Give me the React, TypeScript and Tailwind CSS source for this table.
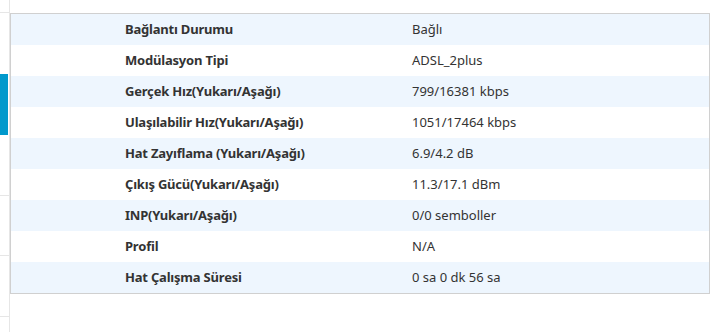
const rows: [string, string][] = [
  ["Bağlantı Durumu", "Bağlı"],
  ["Modülasyon Tipi", "ADSL_2plus"],
  ["Gerçek Hız(Yukarı/Aşağı)", "799/16381 kbps"],
  ["Ulaşılabilir Hız(Yukarı/Aşağı)", "1051/17464 kbps"],
  ["Hat Zayıflama (Yukarı/Aşağı)", "6.9/4.2 dB"],
  ["Çıkış Gücü(Yukarı/Aşağı)", "11.3/17.1 dBm"],
  ["INP(Yukarı/Aşağı)", "0/0 semboller"],
  ["Profil", "N/A"],
  ["Hat Çalışma Süresi", "0 sa 0 dk 56 sa"],
];

export default function App() {
  return (
    <div className="flex h-[332px] w-[727px] bg-white font-['Noto_Sans',sans-serif] text-[13px] text-[#333]">
      <div className="flex w-[10px] shrink-0 flex-col border-r border-[#e6e6e6]">
        <div className="h-[13px] border-b border-[#e6e6e6]" />
        <div className="h-[61px]" />
        <div className="mr-[1px] h-[61px] bg-[#0099cc]" />
        <div className="h-[61px] border-b border-[#e6e6e6]" />
        <div className="h-[60px] border-b border-[#e6e6e6]" />
        <div className="h-[61px] border-b border-[#e6e6e6]" />
      </div>
      <div className="flex-1 pt-[13px] pr-[17px]">
        <div className="border border-[#d0d0d0]">
          {rows.map(([label, value], i) => (
            <div
              key={label}
              className={`grid h-[31px] grid-cols-[401px_1fr] items-center ${
                i % 2 === 0 ? "bg-[#eef6fe]" : "bg-white"
              }`}
            >
              <div className="pl-[114px] font-bold tracking-[-0.2px]">{label}</div>
              <div>{value}</div>
            </div>
          ))}
        </div>
      </div>
    </div>
  );
}
